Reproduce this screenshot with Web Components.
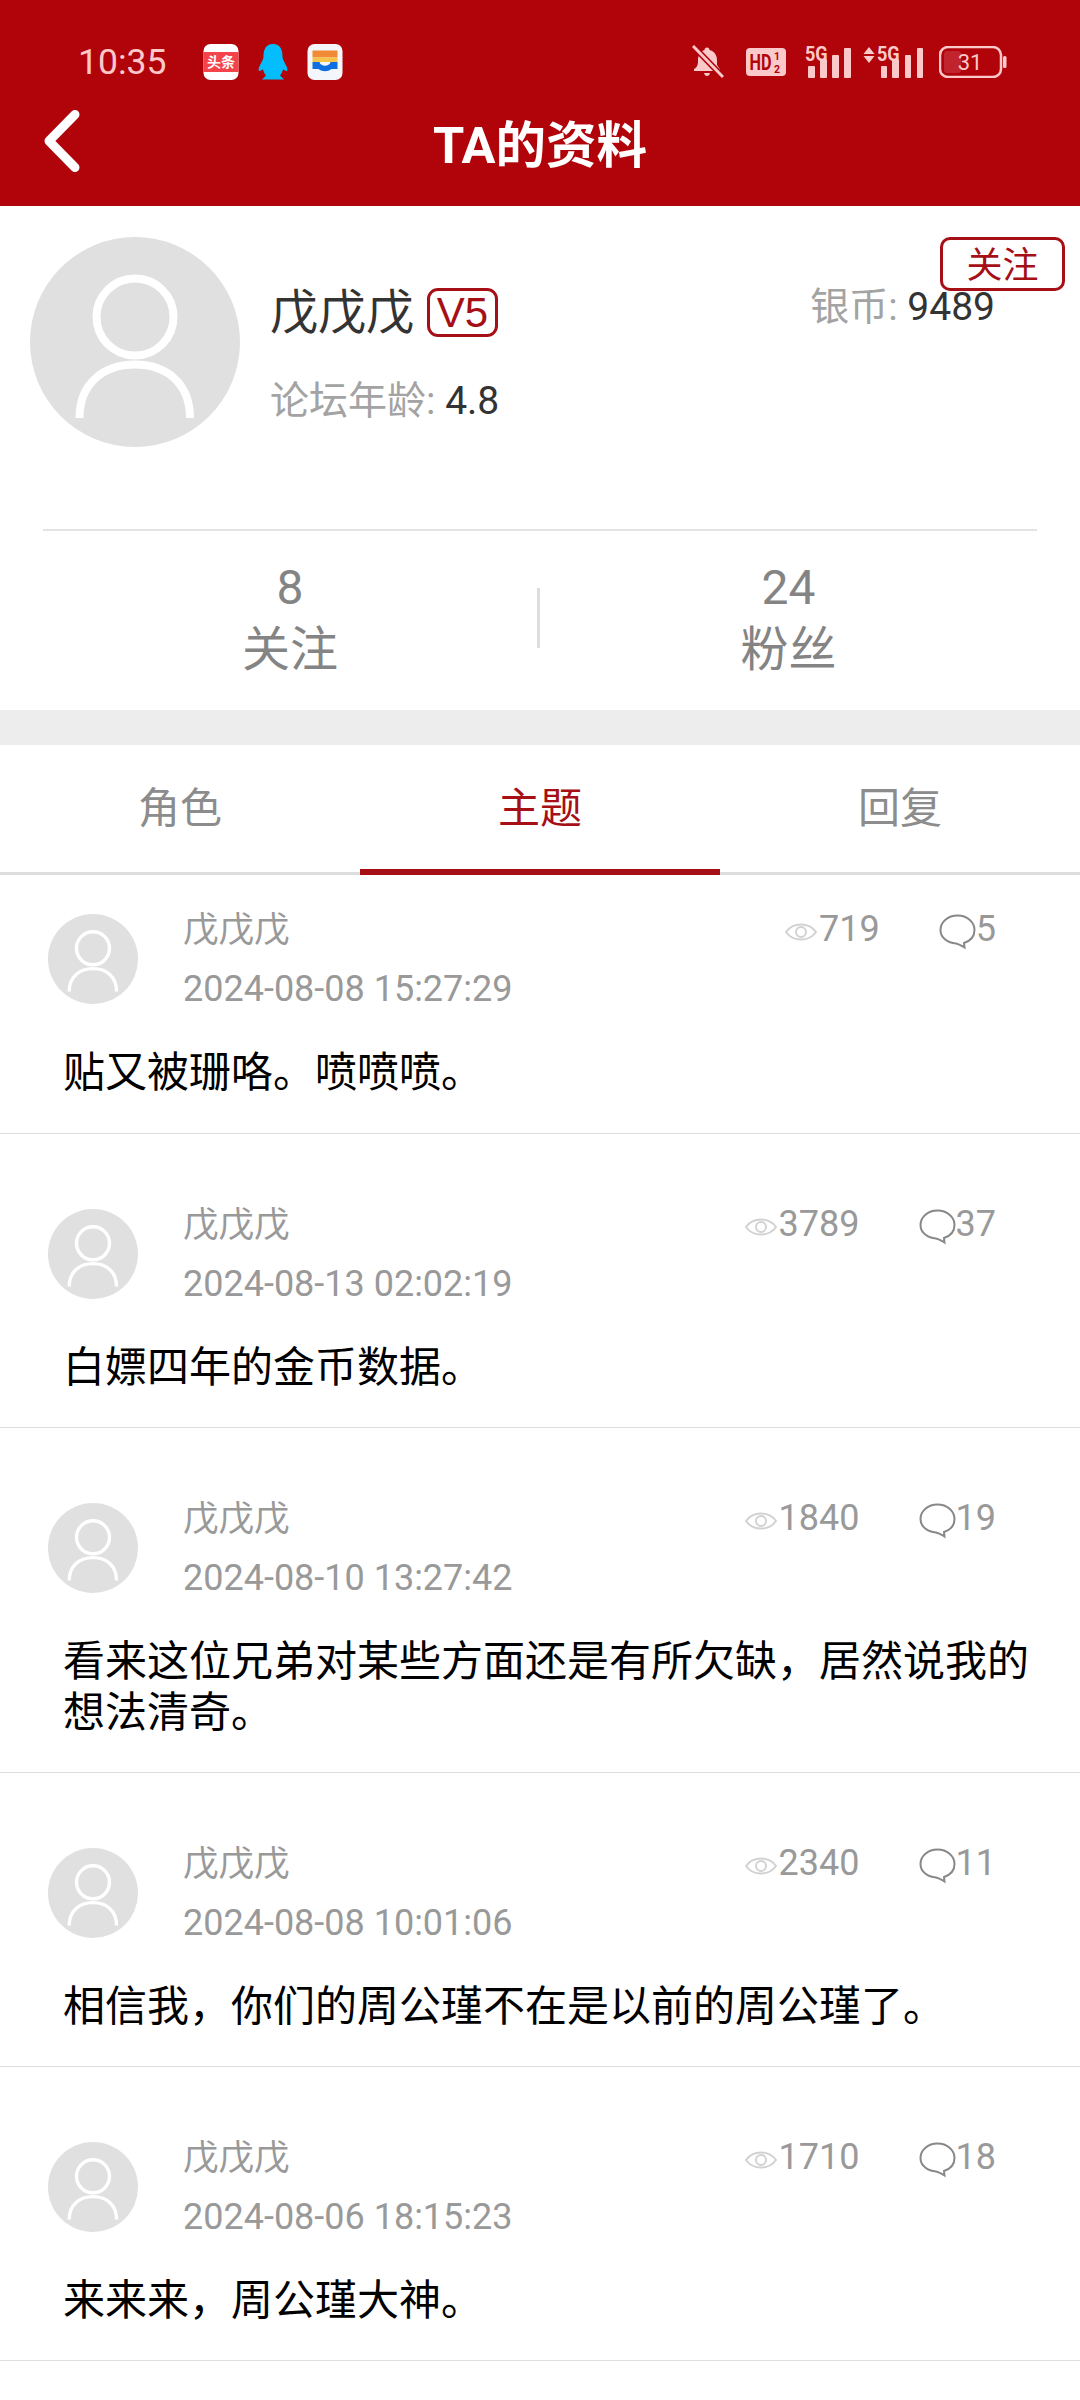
<!DOCTYPE html>
<html lang="zh-CN"><head><meta charset="utf-8"><title>TA的资料</title>
<style>
html,body{margin:0;padding:0;background:#fff}
body{width:1080px;font-family:Roboto,"Noto Sans CJK SC",sans-serif}
</style></head><body>
<status-bar></status-bar>
<nav-bar>TA的资料</nav-bar>
<profile-card name="戊戊戊" level="V5" age="4.8" coins="9489"></profile-card>
<stat-row following="8" followers="24"></stat-row>
<tab-bar active="1"></tab-bar>
<post-row first date="2024-08-08 15:27:29" views="719" replies="5">贴又被珊咯。喷喷喷。</post-row>
<post-row date="2024-08-13 02:02:19" views="3789" replies="37">白嫖四年的金币数据。</post-row>
<post-row date="2024-08-10 13:27:42" views="1840" replies="19">看来这位兄弟对某些方面还是有所欠缺，居然说我的想法清奇。</post-row>
<post-row date="2024-08-08 10:01:06" views="2340" replies="11">相信我，你们的周公瑾不在是以前的周公瑾了。</post-row>
<post-row date="2024-08-06 18:15:23" views="1710" replies="18">来来来，周公瑾大神。</post-row>
<script>
const FONT='Roboto,"Noto Sans CJK SC",sans-serif';
function def(name,fn){customElements.define(name,class extends HTMLElement{connectedCallback(){if(this.shadowRoot)return;const s=this.attachShadow({mode:'open'});s.innerHTML=fn(this);}});}
def('user-avatar',()=>`<style>:host{display:block;flex:none;width:var(--s,210px);height:var(--s,210px)}
.c{width:100%;height:100%;border-radius:50%;background:#e0e0e0;display:block}</style>
<svg class="c" viewBox="0 0 210 210"><g fill="none" stroke="#fff" stroke-width="8"><circle cx="105" cy="80" r="38.500"/><path d="M49.500 181C49.500 146 74 127.500 105 127.500C136 127.500 160 146 160 181"/></g></svg>`);
def('status-bar',()=>`<style>:host{display:flex;align-items:center;height:100px;box-sizing:border-box;padding:23px 73px 0 78px;background:#b0040a;color:#fcc9cb;font-family:${FONT}}
.t{font-size:35.500px;width:125px;white-space:nowrap;line-height:40px}
.apps{display:flex;align-items:center}
.r{margin-left:auto;display:flex;align-items:center}
svg{display:block}
text{font-family:Roboto,"Noto Sans CJK SC",sans-serif}
</style>
<span class="t">10:35</span>
<span class="apps">
<svg width="36" height="36" viewBox="0 0 35 36"><rect width="35" height="36" rx="7" fill="#fff"/><rect y="8" width="35" height="20" fill="#f4434a"/><text x="17.500" y="23" text-anchor="middle" font-size="14" font-weight="700" fill="#fff">头条</text></svg>
<svg style="margin-left:19px" width="30" height="36" viewBox="0 0 30 36"><path d="M15 0C7.500 0 5.500 6 5.500 12.500C5.500 15 3.500 18 1 23.500C.2 26 .6 27.300 1.600 27L5 25.500C5.800 28 6.600 30 8 31.500L4 35.500H26L22 31.500C23.400 30 24.200 28 25 25.500L28.400 27C29.400 27.300 29.800 26 29 23.500C26.500 18 24.500 15 24.500 12.500C24.500 6 22.500 0 15 0Z" fill="#03bdfc"/></svg>
<svg style="margin-left:19px" width="36" height="36" viewBox="0 0 35 36"><rect width="35" height="36" rx="7" fill="#f3f6fb"/><rect x="5" y="6.500" width="25" height="7" fill="#f08a35"/><rect x="5" y="13.500" width="25" height="4.500" fill="#f6c24a"/><path d="M5 18H12C13 23 22 23 23 18H30V25H24C20 28 15 28 11 25H5Z" fill="#0f6fe0"/></svg>
</span>
<span class="r">
<svg width="32" height="34" viewBox="0 0 32 34"><path d="M15 2.500C16.500 2.500 17.500 3.500 17.500 5C22 6 25 10 25 15V20L28 24.500V26H2V24C6 22 6 18 6 15C6 10 9 6 12.500 5C12.500 3.500 13.500 2.500 15 2.500ZM12 28H18C17.500 30 16.500 31 15 31C13.500 31 12.500 30 12 28Z" fill="#fcc9cb"/><path d="M1 1L31 32" stroke="#b0040a" stroke-width="6"/><path d="M1 1L31 32" stroke="#fcc9cb" stroke-width="3"/></svg>
<svg style="margin-left:22px" width="40" height="28" viewBox="0 0 40 28"><rect width="40" height="28" rx="4" fill="#fcc9cb"/><g transform="translate(3.500,21.500) scale(.74,1)"><text font-size="22" font-weight="700" fill="#b0040a">HD</text></g><text x="28" y="11.500" font-size="10.500" font-weight="700" fill="#b0040a">1</text><text x="28" y="25" font-size="10.500" font-weight="700" fill="#b0040a">2</text></svg>
<svg style="margin:-6px 0 0 19px" width="47" height="38" viewBox="0 -6 47 38"><g transform="translate(0,15) scale(.86,1)"><text font-size="21" font-weight="700" fill="#fcc9cb">5G</text></g><g fill="#fcc9cb"><rect x="3" y="20" width="7" height="12" rx="1"/><rect x="15" y="13" width="7" height="19" rx="1"/><rect x="27" y="9" width="7" height="23" rx="1"/><rect x="39" y="2" width="7" height="30" rx="1"/></g></svg>
<svg style="margin:-6px 0 0 11px" width="60" height="38" viewBox="0 -6 60 38"><path d="M6 1L11.500 8H.5ZM6 17L.5 10H11.500Z" fill="#fcc9cb"/><g transform="translate(14,15) scale(.86,1)"><text font-size="21" font-weight="700" fill="#fcc9cb">5G</text></g><g fill="#fcc9cb"><rect x="18" y="20" width="6" height="12" rx="1"/><rect x="29" y="13" width="7" height="19" rx="1"/><rect x="42" y="9" width="6" height="23" rx="1"/><rect x="54" y="2" width="6" height="30" rx="1"/></g></svg>
<svg style="margin-left:16px" width="68" height="32" viewBox="0 0 68 32"><rect x="1" y="1" width="61" height="30" rx="8" fill="none" stroke="#fcc9cb" stroke-width="2.500"/><rect x="5" y="5" width="17" height="22" rx="3" fill="#c1242c"/><rect x="64" y="10" width="3.500" height="12" rx="1.500" fill="#fcc9cb"/><text x="31" y="24" text-anchor="middle" font-size="22" fill="#fcc9cb">31</text></svg>
</span>`);
def('nav-bar',()=>`<style>:host{display:grid;grid-template-columns:1fr auto 1fr;align-items:center;height:106px;box-sizing:border-box;padding:0 0 14px 0;background:#b0040a;color:#fff;font:700 50.500px/60px ${FONT}}
svg{display:block;margin:4px 0 0 42px;align-self:start}</style>
<svg width="40" height="74" viewBox="0 0 40 74"><path d="M33 10.500L7 37L33 63.500" fill="none" stroke="#fff" stroke-width="9" stroke-linecap="round" stroke-linejoin="round"/></svg>
<slot></slot><span></span>`);
def('profile-card',h=>`<style>:host{display:block;position:relative;height:323px;box-sizing:border-box;padding:31px 0 0 30px;background:#fff;font-family:${FONT}}
.w{display:flex}
.i{flex:1;margin-left:30px;padding-right:85px}
.a{display:flex;align-items:center;height:49px;margin-top:51px}
.n{font-size:48px;line-height:49px;color:#333;white-space:nowrap}
.v{box-sizing:border-box;width:71px;height:49px;margin-left:13px;border:3px solid #a50f15;border-radius:11px;color:#a50f15;font:42px/43px "Liberation Sans",sans-serif;text-align:center}
.c{margin-left:auto;align-self:flex-start;margin-top:-4px;font-size:39px;line-height:46px;color:#a3a3a3;white-space:nowrap}
b{font-weight:400;color:#333}
.b{margin-top:38.500px;font-size:39px;line-height:50px;color:#a3a3a3;white-space:nowrap}
.f{position:absolute;top:31px;right:15px;box-sizing:border-box;width:125px;height:54px;border:3px solid #a50f15;border-radius:10px;color:#a50f15;font-size:36px;line-height:52px;text-align:center}
</style>
<div class="w"><user-avatar></user-avatar><div class="i">
<div class="a"><span class="n">${h.getAttribute('name')}</span><span class="v">${h.getAttribute('level')}</span><span class="c">银币: <b>${h.getAttribute('coins')}</b></span></div>
<div class="b">论坛年龄: <b>${h.getAttribute('age')}</b></div></div></div>
<div class="f">关注</div>`);
def('stat-row',h=>`<style>:host{display:block;background:#fff;font-family:${FONT};color:#848484}
.box{margin:0 43px;height:181px;box-sizing:border-box;border-top:2px solid #e4e4e4;display:flex;align-items:center;padding:0 0 4px 0}
.s{flex:1;text-align:center}
.s.x{flex:none;width:494px}
.n{font-size:48px;line-height:62px}
.l{font-size:48px;line-height:62px}
.d{width:3px;height:60px;background:#ddd;margin-top:-1px}
.g{height:35px;background:#ededed}</style>
<div class="box"><div class="s x"><div class="n">${h.getAttribute('following')}</div><div class="l">关注</div></div><div class="d"></div><div class="s"><div class="n">${h.getAttribute('followers')}</div><div class="l">粉丝</div></div></div><div class="g"></div>`);
def('tab-bar',h=>{const a=+h.getAttribute('active');return `<style>:host{display:grid;grid-template-columns:repeat(3,1fr);height:130px;box-sizing:border-box;border-bottom:3px solid #ddd;background:#fff;font-family:${FONT}}
.t{display:flex;align-items:center;justify-content:center;height:130px;box-sizing:border-box;padding-bottom:11px;font-size:42px;color:#8c8c8c}
.on{color:#a50f15;border-bottom:6px solid #a50f15;padding-bottom:5px}</style>`+['角色','主题','回复'].map((t,i)=>`<div class="t ${i===a?'on':''}">${t}</div>`).join('')});
def('post-row',h=>`<style>:host{display:block;box-sizing:border-box;padding:${h.hasAttribute('first')?39:75}px 0 0;border-bottom:1px solid #dedede;background:#fff;font-family:${FONT}}
.top{display:flex;height:90px;padding:0 84px 0 48px}
user-avatar{--s:90px}
.m{margin-left:45px;flex:1;min-width:0}
.l1{display:flex;height:32px;align-items:center;justify-content:space-between}
.n{font-size:35.500px;color:#999;line-height:32px}
.d{font-size:36px;line-height:36px;margin-top:24.500px;color:#999;white-space:nowrap}
.st{display:flex;align-items:center;font-size:36px;color:#999;margin-top:-2px}
.st span{display:flex;align-items:center}
svg{display:block}
.p{margin:43px 0 0;padding:0 28px ${h.hasAttribute('first')?35:34}px 63px;font-size:42px;line-height:51px;color:#000}
</style>
<div class="top"><user-avatar></user-avatar><div class="m">
<div class="l1"><span class="n">戊戊戊</span><span class="st"><span><svg width="32" height="24" viewBox="0 0 32 24" style="margin-top:6px;margin-right:2px"><path d="M1 12C8 2 24 2 31 12C24 22 8 22 1 12Z" fill="none" stroke="#d2d2d2" stroke-width="2"/><circle cx="16" cy="12" r="5" fill="none" stroke="#d2d2d2" stroke-width="2"/></svg>${h.getAttribute('views')}</span><span style="margin-left:59px"><svg width="37" height="36" viewBox="0 0 37 36" style="margin-top:6px"><path d="M18.500 1.500C9 1.500 1.500 8 1.500 16C1.500 24 9 29 17 29.500C20 30 23 32 25.500 33.500L25 29C31 27 35.500 23 35.500 16C35.500 8 28 1.500 18.500 1.500Z" fill="none" stroke="#888" stroke-width="2"/></svg>${h.getAttribute('replies')}</span></span></div>
<div class="d">${h.getAttribute('date')}</div></div></div>
<p class="p"><slot></slot></p>`);
</script>
</body></html>
